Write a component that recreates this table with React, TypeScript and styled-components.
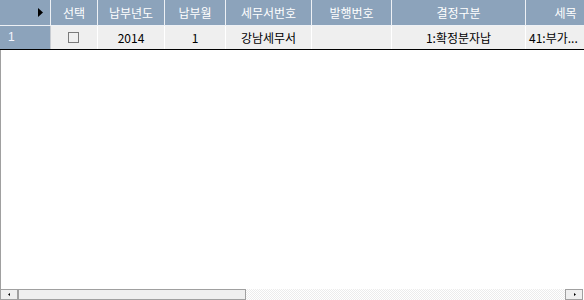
import React from "react";
import styled, { createGlobalStyle } from "styled-components";

const GlobalStyle = createGlobalStyle`
  html, body { margin: 0; padding: 0; background: #ffffff; overflow: hidden; }
  body { font-family: "Noto Sans CJK KR", "Noto Sans", sans-serif; }
`;

const HEADER_BG = "#8ca3bb";

const Grid = styled.div`
  width: 584px;
  height: 300px;
  display: flex;
  flex-direction: column;
  background: #ffffff;
  overflow: hidden;
`;

const Row = styled.div<{ $h: number; $line: string }>`
  display: flex;
  height: ${(p) => p.$h}px;
  border-bottom: 1px solid ${(p) => p.$line};
  flex: none;
  white-space: nowrap;
`;

const HeaderCell = styled.div<{ $w: number }>`
  flex: none;
  width: ${(p) => p.$w}px;
  box-sizing: border-box;
  border-right: 1px solid #eef1f5;
  background: ${HEADER_BG};
  color: #ffffff;
  font-size: 12px;
  display: flex;
  align-items: center;
  justify-content: center;
  padding-bottom: 1px;
`;

const CornerCell = styled(HeaderCell)`
  justify-content: flex-end;
  padding-right: 7px;
  padding-bottom: 0;
`;

const RowHeadCell = styled.div<{ $w: number }>`
  flex: none;
  width: ${(p) => p.$w}px;
  box-sizing: border-box;
  border-right: 1px solid #c8ccd2;
  background: ${HEADER_BG};
  color: #f4f6ff;
  font-family: "Liberation Sans", sans-serif;
  font-size: 12px;
  display: flex;
  align-items: center;
  padding-left: 8px;
  padding-bottom: 1px;
`;

const DataCell = styled.div<{ $w: number; $align?: "left" | "center" }>`
  flex: none;
  width: ${(p) => p.$w}px;
  box-sizing: border-box;
  border-right: 1px solid #ffffff;
  background: #efefef;
  color: #000000;
  font-size: 12px;
  display: flex;
  align-items: center;
  justify-content: ${(p) => (p.$align === "left" ? "flex-start" : "center")};
  padding-left: ${(p) => (p.$align === "left" ? "3px" : "0")};
  padding-bottom: 1px;
  overflow: hidden;
`;

const CheckBox = styled.span`
  width: 11px;
  height: 11px;
  box-sizing: border-box;
  border: 1px solid #7a7a7a;
  background: #efefef;
  margin-right: 2px;
`;

const Body = styled.div`
  flex: 1;
  border-left: 1px solid #a0a0a0;
`;

const ScrollBar = styled.div`
  height: 11px;
  flex: none;
  display: flex;
`;

const ScrollButton = styled.div`
  width: 18px;
  box-sizing: border-box;
  border: 1px solid #a0a0a0;
  background: #efefef;
  display: flex;
  align-items: center;
  justify-content: center;
  flex: none;
`;

const Thumb = styled.div<{ $w: number }>`
  width: ${(p) => p.$w}px;
  box-sizing: border-box;
  border: 1px solid #a0a0a0;
  background: #efefef;
  flex: none;
`;

const Track = styled.div`
  flex: 1;
  background-color: #ffffff;
  background-image: conic-gradient(#ececec 25%, #ffffff 0 50%, #ececec 0 75%, #ffffff 0);
  background-size: 2px 2px;
`;

const RightButton = styled(ScrollButton)`
  margin-right: 1px;
`;

const columns = [
  { title: "선택", w: 47 },
  { title: "납부년도", w: 67 },
  { title: "납부월", w: 61 },
  { title: "세무서번호", w: 86 },
  { title: "발행번호", w: 80 },
  { title: "결정구분", w: 134 },
  { title: "세목", w: 80 },
];

const values: (string | null)[] = [null, "2014", "1", "강남세무서", "", "1:확정분자납", "41:부가..."];

export default function App() {
  return (
    <>
      <GlobalStyle />
      <Grid>
        <Row $h={25} $line="#eef1f5">
          <CornerCell $w={51}>
            <svg width="5" height="9" viewBox="0 0 5 9">
              <polygon points="0,0 5,4.5 0,9" fill="#000" />
            </svg>
          </CornerCell>
          {columns.map((c) => (
            <HeaderCell key={c.title} $w={c.w}>
              {c.title}
            </HeaderCell>
          ))}
        </Row>
        <Row $h={23} $line="#000000">
          <RowHeadCell $w={51}>1</RowHeadCell>
          {columns.map((c, i) => (
            <DataCell key={c.title} $w={c.w} $align={i === 6 ? "left" : "center"}>
              {i === 0 ? <CheckBox /> : values[i]}
            </DataCell>
          ))}
        </Row>
        <Body />
        <ScrollBar>
          <ScrollButton>
            <svg width="3" height="3" viewBox="0 0 3 3">
              <polygon points="2,0 2,3 0,1.5" fill="#000" />
            </svg>
          </ScrollButton>
          <Thumb $w={228} />
          <Track />
          <RightButton>
            <svg width="3" height="3" viewBox="0 0 3 3">
              <polygon points="1,0 1,3 3,1.5" fill="#000" />
            </svg>
          </RightButton>
        </ScrollBar>
      </Grid>
    </>
  );
}
